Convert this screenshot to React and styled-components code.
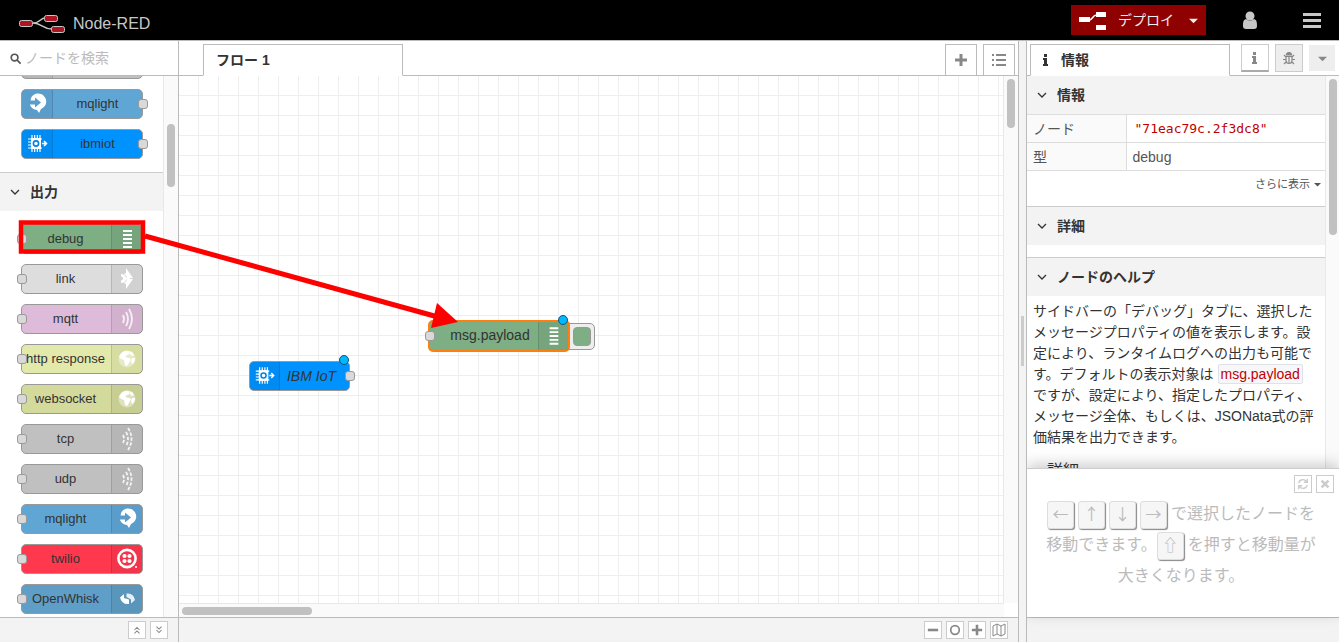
import React from 'react';
import styled, { createGlobalStyle, css } from 'styled-components';

const GlobalStyle = createGlobalStyle`
  * {
    box-sizing: border-box;
  }

  body {
    margin: 0;
    overflow: hidden;
    color: #333;
    font-family: 'Liberation Sans', 'Noto Sans CJK JP', sans-serif;
    font-size: 14px;
    line-height: 20px;
  }

  button,
  input {
    margin: 0;
    padding: 0;
    font: inherit;
  }
`;

/* Icons */
const icons = {
  mqlight: (
    <>
      <path d="M9 9a8 8 0 1 1 10 11l-2 4-2-3a8 8 0 0 1-7-5z" />
      <path d="M6 11.500h7V8.500l6 5-6 5v-3H6z" fill="#5a9dca" />
    </>
  ),
  iot: (
    <>
      <path d="M9 9h10v11H9z" />
      <path
        d="M10 6v17M12.700 6v17M15.400 6v17M18 6v17M6 10h14M6 13h4M6 16h4M6 19h14"
        stroke="#fff"
        strokeWidth="1.200"
      />
      <circle cx="14" cy="14.500" r="2.600" fill="none" stroke="#0084e6" strokeWidth="1.600" />
      <path d="M20 14.500h4M22 12l2.500 2.500-2.500 2.500" fill="none" stroke="#fff" strokeWidth="1.500" />
    </>
  ),
  debug: (
    <path d="M11 7h9M11 11h9M11 15h9M11 19h9M11 23h9" stroke="#fff" strokeWidth="2" />
  ),
  link: (
    <>
      <path d="M14 4l7 10h-6q0-2-3-4l2-1zM14 25l7-10h-6q0 2-3 4l2 1z" />
      <path d="M9 10q4 0 5 3.500h4v2h-4Q13 19 9 19v-2.500a2 2 0 0 0 0-4z" />
    </>
  ),
  mqtt: (
    <path
      d="M11 11q2 4 0 8M14 8q4 7 0 14M17 5q6 10 0 20"
      fill="none"
      stroke="#fff"
      strokeWidth="1.800"
      opacity=".8"
    />
  ),
  globe: (
    <>
      <circle cx="15" cy="15" r="8.500" opacity=".4" />
      <path d="M8 11q3-5 9-4l1 3-3 1-2 2 4 1 2 1-2 4-2 3-2-1-1-5-3-1-2-2zM18 7q3 1 4 4l-2 1-2-2zM20 14l3 0q0 4-3 6l-1-3z" />
    </>
  ),
  bridge: (
    <path
      d="M11 11q2 4 0 8M14 8q4 7 0 14M16 4q7 11 0 22"
      fill="none"
      stroke="#fff"
      strokeWidth="1.800"
      strokeDasharray="3.500 1.500"
      opacity=".85"
    />
  ),
  twilio: (
    <>
      <circle cx="15" cy="14.500" r="8.600" fill="none" stroke="#fff" strokeWidth="2.600" />
      <circle cx="12.500" cy="12" r="2.100" />
      <circle cx="17.500" cy="12" r="2.100" />
      <circle cx="12.500" cy="17" r="2.100" />
      <circle cx="17.500" cy="17" r="2.100" />
      <circle cx="24" cy="23" r="1" />
    </>
  ),
  whisk: (
    <>
      <path d="M8 13.500l4-3.500v4l5 1.500v4.500q-7 1-9-6.500z" />
      <path d="M23 16l-4 3.500v-4L14.500 13V9.500q7-1 8.500 6.500z" opacity=".85" />
    </>
  ),
};

const NodeIcon = ({ name }) => (
  <svg width="30" height="30" viewBox="0 0 30 30" fill="#fff" aria-hidden="true">
    {icons[name]}
  </svg>
);

const Glyph = ({ size = 14, width = 2, children }) => (
  <svg
    width={size}
    height={size}
    viewBox="0 0 14 14"
    fill="none"
    stroke="currentColor"
    strokeWidth={width}
    aria-hidden="true"
  >
    {children}
  </svg>
);

const Chevron = ({ size = 14 }) => (
  <Glyph size={size} width="1.300">
    <path d="M3 5l4 4 4-4" />
  </Glyph>
);

const InfoIcon = () => (
  <Glyph width="0">
    <path fill="currentColor" d="M5 1h3v3H5zM4 5h4v6h1v2H4v-2h1V7H4z" />
  </Glyph>
);

/* Page */
const Page = styled.div`
  position: relative;
  display: flex;
  flex-direction: column;
  height: 100vh;
  overflow: hidden;
  background: #fff;
`;

const Header = styled.header`
  display: flex;
  flex: none;
  align-items: center;
  height: 41px;
  padding-right: 9px;
  border-bottom: 1px solid #bbb;
  background: #000;
  color: #c7c7c7;
`;

const Brand = styled.div`
  display: flex;
  flex: 1;
  align-items: center;
  gap: 7px;
  padding: 7px 0 0 19px;
  font-size: 16px;
`;

const Deploy = styled.button`
  display: flex;
  align-items: center;
  width: 135px;
  height: 30px;
  padding: 0 8px;
  border: 0;
  background: #8f0000;
  color: #eee;

  span {
    flex: 1;
    padding-left: 11px;
    text-align: left;
  }
`;

const HeaderButton = styled.button`
  display: flex;
  justify-content: center;
  width: ${({ wide }) => (wide ? 88 : 36)}px;
  border: 0;
  background: none;
  color: #c7c7c7;
`;

const Editor = styled.main`
  display: grid;
  flex: 1;
  grid-template-columns: 179px 1fr 8px 313px;
  min-height: 0;
`;

const Column = styled.section`
  display: flex;
  flex-direction: column;
  min-width: 0;
  min-height: 0;
  overflow: hidden;
  ${({ edge }) => edge && `border-${edge}: 1px solid #bbb;`}
`;

const Bar = styled.div`
  display: flex;
  flex: none;
  align-items: flex-end;
  height: 35px;
  border-bottom: 1px solid #bbb;
`;

const Footer = styled.footer`
  display: flex;
  flex: none;
  justify-content: flex-end;
  gap: 4px;
  height: 25px;
  padding: 3px 10px;
  border-top: 1px solid #bbb;
  background: #f3f3f3;
`;

const SmallButton = styled.button`
  display: flex;
  align-items: center;
  justify-content: center;
  width: 18px;
  height: 18px;
  border: 1px solid #ccc;
  background: #fff;
  color: ${({ faint }) => (faint ? '#ccc' : '#888')};
`;

const Track = styled.div`
  flex: none;
  background: #fafafa;
  ${({ horizontal, narrow }) =>
    horizontal
      ? css`
          height: 14px;
          margin-right: 14px;
          padding: 3px;
          border-top: 1px solid #e8e8e8;
        `
      : css`
          width: ${narrow ? 14 : 15}px;
          padding: 3px;
          border-left: 1px solid #e8e8e8;
        `}
`;

const Thumb = styled.div`
  width: ${({ width = 8 }) => width}px;
  height: ${({ height = 8 }) => height}px;
  margin-top: ${({ top = 0 }) => top}px;
  border-radius: 4px;
  background: #c1c1c1;
`;

const Fill = styled.div`
  display: flex;
  flex: 1;
  min-height: 0;
  overflow: hidden;
`;

/* Palette */
const Search = styled.label`
  display: flex;
  align-items: center;
  gap: 3px;
  width: 100%;
  height: 34px;
  padding-left: 9px;
  color: #555;

  input {
    width: 140px;
    border: 0;
    outline: 0;
  }

  input::placeholder {
    color: #bbb;
  }
`;

const PaletteList = styled.div`
  flex: 1;
`;

const Nodes = styled.div`
  display: flex;
  flex-direction: column;
  gap: 10px;
  padding: 13px 20px 13px 21px;
  ${({ scrolled }) => scrolled && 'margin-top: -40px;'}
`;

const Label = styled.span`
  flex: 1;
  align-self: center;
  text-align: center;
  white-space: nowrap;
`;

const Node = styled.div`
  position: relative;
  display: flex;
  flex: none;
  flex-direction: ${({ output }) => (output ? 'row-reverse' : 'row')};
  width: ${({ width = 122 }) => width}px;
  height: ${({ selected }) => (selected ? 32 : 30)}px;
  border: ${({ selected }) => (selected ? '2px solid #ff7f0e' : '1px solid #999')};
  border-radius: 5px;
  background: ${({ color }) => color};
  font-size: 13px;

  ${Label} {
    padding-right: ${({ output }) => (output ? 2 : 0)}px;
  }
`;

const IconCell = styled.div`
  display: flex;
  flex: none;
  align-items: center;
  justify-content: center;
  width: 31px;
  background: rgba(0, 0, 0, 0.05);
  ${({ output }) => `border-${output ? 'left' : 'right'}: 1px solid rgba(0, 0, 0, 0.12);`}
`;

const Port = styled.i`
  position: absolute;
  top: calc(50% - 5px);
  ${({ side }) => (side === 'left' ? 'left: -5px' : 'right: -6px')};
  width: 10px;
  height: 10px;
  border: 1px solid #999;
  border-radius: 3px;
  background: #d9d9d9;
`;

const SectionTitle = styled.button`
  display: flex;
  align-items: center;
  gap: 8px;
  width: 100%;
  height: ${({ first }) => (first ? 38 : 39)}px;
  padding: 0 8px;
  border: 0;
  border-top: ${({ first }) => (first ? '0' : '1px solid #ccc')};
  background: #f3f3f3;
  color: #333;
  font-weight: bold;
`;

/* Workspace */
const Tab = styled.div`
  display: flex;
  align-items: center;
  gap: 8px;
  width: 200px;
  height: 32px;
  margin: 0 auto -1px ${({ offset }) => offset}px;
  padding: 0 ${({ inset }) => inset}px;
  border: 1px solid #bbb;
  border-bottom-color: #fff;
  background: #fff;
  font-weight: bold;
`;

const BarButton = styled.button`
  display: flex;
  align-items: center;
  justify-content: center;
  width: 32px;
  height: 31px;
  margin-right: ${({ last }) => (last ? 3 : 6)}px;
  border: 1px solid #bbb;
  border-bottom: 0;
  background: #fff;
  color: #888;
`;

const Canvas = styled.div`
  position: relative;
  flex: 1;
  background-image: linear-gradient(to right, transparent 19px, #eee 19px),
    linear-gradient(to bottom, transparent 19px, #eee 19px);
  background-size: 20px 20px;
`;

const Placed = styled.div`
  position: absolute;
  left: ${({ x }) => x}px;
  top: ${({ y }) => y}px;

  ${Node} {
    font-size: 14px;
  }

  ${IconCell} {
    width: 30px;
  }

  ${Label} {
    padding: ${({ labelPadding }) => labelPadding};
  }
`;

const Unconfigured = styled(Label)`
  font-style: italic;
`;

const Changed = styled.i`
  position: absolute;
  top: -7px;
  right: 0;
  width: 10px;
  height: 10px;
  border: 1px solid #0b5578;
  border-radius: 50%;
  background: #00b8ff;
`;

const Toggle = styled.button`
  position: absolute;
  top: 3px;
  left: 129px;
  width: 38px;
  height: 27px;
  padding: 3px;
  border: 1px solid #999;
  border-radius: 5px;
  background: #eee;

  i {
    display: block;
    width: 18px;
    height: 19px;
    margin-left: auto;
    border: 1px solid #999;
    border-radius: 4px;
    background: #7dae84;
  }
`;

const Separator = styled.div`
  display: flex;
  align-items: center;
  justify-content: center;
  border-left: 1px solid #bbb;
  background: #f3f3f3;

  i {
    width: 3px;
    height: 50px;
    margin-bottom: 2px;
    background: #ccc;
  }
`;

/* Sidebar */
const SidebarButton = styled.button`
  display: flex;
  align-items: center;
  justify-content: center;
  align-self: center;
  width: ${({ plain }) => (plain ? 26 : 28)}px;
  height: ${({ plain }) => (plain ? 26 : 28)}px;
  margin-right: ${({ plain }) => (plain ? 4 : 6)}px;
  border: ${({ plain }) => (plain ? '0' : '1px solid #ccc')};
  ${({ active }) => active && 'border-bottom: 2px solid #aaa;'}
  background: ${({ active }) => (active ? '#fff' : '#eee')};
  color: #888;
`;

const Details = styled.div`
  flex: 1;
  min-width: 0;
`;

const Properties = styled.table`
  width: 100%;
  border-collapse: collapse;
  color: #555;

  th,
  td {
    height: 28px;
    padding: 2px 6px;
    border-top: 1px solid #ddd;
    border-bottom: 1px solid #ddd;
    font-weight: normal;
    text-align: left;
  }

  th {
    width: 99px;
    border-right: 1px solid #ddd;
    background: #fafafa;
  }

  code {
    padding: 0 2px;
    color: #c00000;
    font-family: 'DejaVu Sans Mono', monospace;
    font-size: 13px;
  }
`;

const More = styled.div`
  display: flex;
  justify-content: flex-end;
  height: 35px;
  padding: 3px 4px 0;

  a {
    display: flex;
    align-items: center;
    gap: 4px;
    height: 20px;
    color: #555;
    font-size: 11px;
    text-decoration: none;
  }
`;

const Gap = styled.div`
  height: 12px;
`;

const Help = styled.div`
  padding: 5px 10px 0 6px;
  line-height: 21px;

  p {
    margin: 0 0 12px;
  }

  code {
    padding: 1px 2px;
    border: 1px solid #e1e1e8;
    border-radius: 2px;
    background: #f7f7f9;
    color: #c00000;
    font-family: inherit;
  }

  h3 {
    display: flex;
    align-items: center;
    margin: 0;
    font-size: 16px;
    font-weight: normal;
  }
`;

const Tips = styled.div`
  position: relative;
  flex: none;
  height: 149px;
  padding: 29px 20px 0 16px;
  border-top: 1px solid #ccc;
  background: #fff;
  box-shadow: 0 -4px 14px rgba(0, 0, 0, 0.2);
  color: #bbb;
  font-size: 16px;
  line-height: 31px;
  text-align: center;

  p {
    margin: 0;
  }
`;

const TipButtons = styled.div`
  position: absolute;
  top: 6px;
  right: 5px;
  display: flex;
  gap: 4px;
`;

const Key = styled.kbd`
  display: inline-block;
  width: 27px;
  height: 28px;
  margin-right: 4px;
  border: 1px solid #ddd;
  border-radius: 3px;
  background: #f6f6f6;
  box-shadow: 1px 1px 1px #888;
  font-family: 'Noto Sans CJK JP', sans-serif;
  font-size: 16px;
  line-height: 22px;
  vertical-align: middle;
`;

const Annotation = styled.svg`
  position: absolute;
  top: 0;
  left: 0;
  pointer-events: none;
`;

const inputs = [
  { label: '', color: '#c0c0c0', icon: 'bridge' },
  { label: 'mqlight', color: '#5fa6d5', icon: 'mqlight' },
  { label: 'ibmiot', color: '#0093ff', icon: 'iot' },
];

const outputs = [
  { label: 'debug', color: '#7dae84', icon: 'debug' },
  { label: 'link', color: '#ddd', icon: 'link' },
  { label: 'mqtt', color: '#debbd9', icon: 'mqtt' },
  { label: 'http response', color: '#e3e9aa', icon: 'globe' },
  { label: 'websocket', color: '#d3da9b', icon: 'globe' },
  { label: 'tcp', color: '#c0c0c0', icon: 'bridge' },
  { label: 'udp', color: '#c0c0c0', icon: 'bridge' },
  { label: 'mqlight', color: '#5fa6d5', icon: 'mqlight' },
  { label: 'twilio', color: '#ff384e', icon: 'twilio' },
  { label: 'OpenWhisk', color: '#5f9ec6', icon: 'whisk' },
];

const PaletteNode = ({ label, color, icon, output }) => (
  <Node color={color} output={output}>
    <IconCell output={output}>
      <NodeIcon name={icon} />
    </IconCell>
    <Label>{label}</Label>
    <Port side={output ? 'left' : 'right'} />
  </Node>
);

const Palette = () => (
  <Column edge="right">
    <Bar>
      <Search>
        <Glyph size={13} width="1.800">
          <circle cx="6" cy="6" r="3.600" />
          <path d="M8.500 8.500l4 4" />
        </Glyph>
        <input type="text" placeholder="ノードを検索" aria-label="ノードを検索" />
      </Search>
    </Bar>
    <Fill>
      <PaletteList>
        <Nodes scrolled>
          {inputs.map((node) => (
            <PaletteNode key={node.label} {...node} />
          ))}
        </Nodes>
        <SectionTitle>
          <Chevron />
          出力
        </SectionTitle>
        <Nodes>
          {outputs.map((node) => (
            <PaletteNode key={node.label} {...node} output />
          ))}
        </Nodes>
      </PaletteList>
      <Track>
        <Thumb height={63} top={45} />
      </Track>
    </Fill>
    <Footer>
      <SmallButton aria-label="collapse">
        <Glyph size={12} width="1.200">
          <path d="M4 7l3-3 3 3M4 11l3-3 3 3" />
        </Glyph>
      </SmallButton>
      <SmallButton aria-label="expand">
        <Glyph size={12} width="1.200">
          <path d="M4 3l3 3 3-3M4 7l3 3 3-3" />
        </Glyph>
      </SmallButton>
    </Footer>
  </Column>
);

const Workspace = () => (
  <Column>
    <Bar>
      <Tab offset={24} inset={12}>
        フロー 1
      </Tab>
      <BarButton aria-label="add">
        <Glyph width="3">
          <path d="M7 1v12M1 7h12" />
        </Glyph>
      </BarButton>
      <BarButton last aria-label="list">
        <Glyph>
          <path d="M0 2h2M4 2h10M0 7h2M4 7h10M0 12h2M4 12h10" />
        </Glyph>
      </BarButton>
    </Bar>
    <Fill>
      <Canvas>
        <Placed x={70} y={285} labelPadding="0 6px 0 0">
          <Node color="#0093ff" width={101}>
            <IconCell>
              <NodeIcon name="iot" />
            </IconCell>
            <Unconfigured>IBM IoT</Unconfigured>
            <Port side="right" />
            <Changed />
          </Node>
        </Placed>
        <Placed x={249} y={244} labelPadding="0 0 2px 12px">
          <Toggle aria-label="debug">
            <i />
          </Toggle>
          <Node color="#7dae84" width={142} selected output>
            <IconCell output>
              <NodeIcon name="debug" />
            </IconCell>
            <Label>msg.payload</Label>
            <Port side="left" />
            <Changed />
          </Node>
        </Placed>
      </Canvas>
      <Track>
        <Thumb height={49} />
      </Track>
    </Fill>
    <Track horizontal>
      <Thumb width={130} />
    </Track>
    <Footer>
      <SmallButton aria-label="zoom out">
        <Glyph size={12} width="3">
          <path d="M1 7h12" />
        </Glyph>
      </SmallButton>
      <SmallButton aria-label="zoom reset">
        <Glyph size={12}>
          <circle cx="7" cy="7" r="5" />
        </Glyph>
      </SmallButton>
      <SmallButton aria-label="zoom in">
        <Glyph size={12} width="3">
          <path d="M7 1v12M1 7h12" />
        </Glyph>
      </SmallButton>
      <SmallButton aria-label="map">
        <Glyph width="1">
          <path d="M1 3l4-2 4 2 4-2v10l-4 2-4-2-4 2zM5 1v10M9 3v10" />
        </Glyph>
      </SmallButton>
    </Footer>
  </Column>
);

const Caret = ({ size = 9 }) => (
  <svg width={size} height={size} viewBox="0 0 10 10" fill="currentColor" aria-hidden="true">
    <path d="M0 3h10L5 8z" />
  </svg>
);

const Sidebar = () => (
  <Column edge="left">
    <Bar>
      <Tab offset={3} inset={8}>
        <InfoIcon />
        情報
      </Tab>
      <SidebarButton active aria-label="情報">
        <InfoIcon />
      </SidebarButton>
      <SidebarButton aria-label="デバッグ">
        <Glyph width="1.200">
          <path d="M4.500 4a2.500 2.500 0 0 1 5 0z" fill="currentColor" />
          <path d="M4 5.500h6v4a3 3 0 0 1-6 0z" />
          <path d="M7 5v7M4 6L2 4M10 6l2-2M4 8.500H1M10 8.500h3M4 11l-2 2M10 11l2 2" />
        </Glyph>
      </SidebarButton>
      <SidebarButton plain aria-label="menu">
        <Caret />
      </SidebarButton>
    </Bar>
    <Fill>
      <Details>
        <SectionTitle first>
          <Chevron />
          情報
        </SectionTitle>
        <Properties>
          <tbody>
            <tr>
              <th scope="row">ノード</th>
              <td>
                <code>"71eac79c.2f3dc8"</code>
              </td>
            </tr>
            <tr>
              <th scope="row">型</th>
              <td>debug</td>
            </tr>
          </tbody>
        </Properties>
        <More>
          <a href="#more">
            さらに表示
            <Caret size={7} />
          </a>
        </More>
        <SectionTitle>
          <Chevron />
          詳細
        </SectionTitle>
        <Gap />
        <SectionTitle>
          <Chevron />
          ノードのヘルプ
        </SectionTitle>
        <Help>
          <p>
            サイドバーの「デバッグ」タブに、選択したメッセージプロパティの値を表示します。設定により、ランタイムログへの出力も可能です。デフォルトの表示対象は{' '}
            <code>msg.payload</code>{' '}
            ですが、設定により、指定したプロパティ、メッセージ全体、もしくは、JSONata式の評価結果を出力できます。
          </p>
          <h3>
            <Chevron />
            詳細
          </h3>
        </Help>
      </Details>
      <Track narrow>
        <Thumb height={156} />
      </Track>
    </Fill>
    <Tips>
      <TipButtons>
        <SmallButton faint aria-label="refresh">
          <Glyph size={12} width="1.600">
            <path d="M2 6a5 5 0 0 1 9-2M12 1v4H8M12 8a5 5 0 0 1-9 2M2 13V9h4" />
          </Glyph>
        </SmallButton>
        <SmallButton faint aria-label="close">
          <Glyph size={12} width="3">
            <path d="M3 3l8 8M11 3l-8 8" />
          </Glyph>
        </SmallButton>
      </TipButtons>
      <p>
        <Key>←</Key>
        <Key>↑</Key>
        <Key>↓</Key>
        <Key>→</Key>
        で選択したノードを移動できます。
        <Key>⇧</Key>
        を押すと移動量が大きくなります。
      </p>
    </Tips>
    <Footer />
  </Column>
);

const App = () => (
  <Page>
    <GlobalStyle />
    <Header>
      <Brand>
        <svg width="47" height="20" viewBox="0 0 47 20" aria-hidden="true">
          <path
            d="M14 9c8 0 7-5 12-5M14 9c9 0 9 6 19 6"
            fill="none"
            stroke="#c7c7c7"
            strokeWidth="1.400"
          />
          <g fill="#aa1722" stroke="#c7c7c7">
            <rect x="0.500" y="6.500" width="13" height="6" rx="2" />
            <rect x="25.500" y="1.500" width="13" height="6" rx="2" />
            <rect x="32.500" y="12.500" width="13" height="6" rx="2" />
          </g>
        </svg>
        Node-RED
      </Brand>
      <Deploy>
        <svg width="28" height="20" viewBox="0 0 28 20" fill="#fff" aria-hidden="true">
          <path d="M0 7h11v5H0zM17 2h10v5H17zM17 15h10v5H17z" />
          <path d="M10 10c4 0 3-5 8-5" fill="none" stroke="#fff" strokeWidth="1.500" />
        </svg>
        <span>デプロイ</span>
        <Caret />
      </Deploy>
      <HeaderButton wide aria-label="user">
        <svg width="16" height="18" viewBox="0 0 16 18" fill="currentColor" aria-hidden="true">
          <circle cx="8" cy="5" r="4.500" />
          <path d="M4 8a6 6 0 0 0 8 0c3 1 3 4 3 7q0 3-3 3H4q-3 0-3-3c0-3 0-6 3-7z" />
        </svg>
      </HeaderButton>
      <HeaderButton aria-label="menu">
        <svg width="18" height="16" viewBox="0 0 18 16" fill="currentColor" aria-hidden="true">
          <path d="M0 1h18v3H0zM0 7h18v3H0zM0 13h18v3H0z" />
        </svg>
      </HeaderButton>
    </Header>
    <Editor>
      <Palette />
      <Workspace />
      <Separator>
        <i />
      </Separator>
      <Sidebar />
    </Editor>
    <Annotation width="470" height="340" aria-hidden="true">
      <rect x="21" y="222.500" width="122" height="29" fill="none" stroke="#f00" strokeWidth="4.500" />
      <path d="M145 236L438 317" stroke="#f00" strokeWidth="5" />
      <path d="M458 322L437 303L431 328z" fill="#f00" />
    </Annotation>
  </Page>
);

export default App;
